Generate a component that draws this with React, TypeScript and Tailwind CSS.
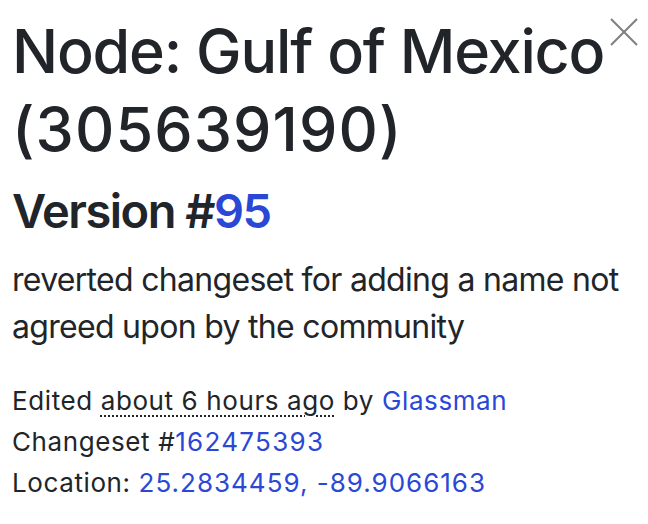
export default function App() {
  return (
    <div
      className="min-h-screen bg-white text-[#212529] pl-3 pr-[9px] pt-[12px]"
      style={{ fontFamily: "Inter, 'Noto Sans', sans-serif" }}
    >
      <div className="flex items-start">
        <h2 className="flex-1 text-[61px] leading-[78px] font-medium tracking-[-1.2px]">
          Node: Gulf of Mexico{" "}
          <span className="tracking-[1.1px]">(305639190)</span>
        </h2>
        <button className="mt-[5px] text-[#7f7f7f]" aria-label="Close">
          <svg width="30" height="30" viewBox="0 0 30 30" fill="none" stroke="currentColor" strokeWidth="2">
            <path d="M2 2L28 28M28 2L2 28" />
          </svg>
        </button>
      </div>

      <h3 className="mt-[15px] text-[47px] leading-[56px] font-semibold tracking-[-1.5px]">
        Version #<a href="#" className="text-[#2b47d6]">95</a>
      </h3>

      <p className="mt-[17px] text-[32px] leading-[47px] tracking-[-0.7px]">
        reverted changeset for adding a name not agreed upon by the community
      </p>

      <div className="mt-[30px] text-[26px] leading-[41px] tracking-[0.6px]">
        <div>
          Edited{" "}
          <abbr
            title="about 6 hours ago"
            className="no-underline underline decoration-dotted decoration-[2px] underline-offset-[5px]"
          >
            about 6 hours ago
          </abbr>{" "}
          by <a href="#" className="text-[#2b47d6]">Glassman</a>
        </div>
        <div>
          Changeset #<a href="#" className="text-[#2b47d6] tracking-[1.3px]">162475393</a>
        </div>
        <div>
          Location:{" "}
          <a href="#" className="text-[#2b47d6] tracking-[1px]">
            25.2834459, -89.9066163
          </a>
        </div>
      </div>
    </div>
  );
}
